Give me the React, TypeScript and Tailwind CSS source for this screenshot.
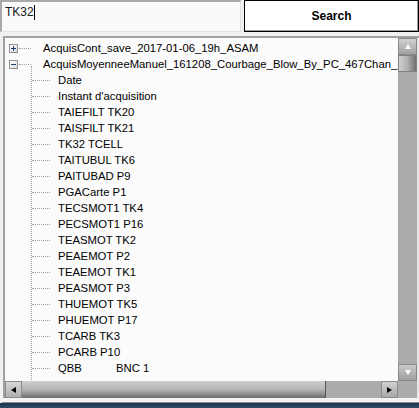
import React from 'react';

const font = { fontFamily: 'Tahoma, "Liberation Sans", Arial, sans-serif' };

const children = [
  'Date',
  "Instant d'acquisition",
  'TAIEFILT TK20',
  'TAISFILT TK21',
  'TK32 TCELL',
  'TAITUBUL TK6',
  'PAITUBAD P9',
  'PGACarte P1',
  'TECSMOT1 TK4',
  'PECSMOT1 P16',
  'TEASMOT TK2',
  'PEAEMOT P2',
  'TEAEMOT TK1',
  'PEASMOT P3',
  'THUEMOT TK5',
  'PHUEMOT P17',
  'TCARB TK3',
  'PCARB P10',
];

function Expander({ open }: { open: boolean }) {
  return (
    <div className="relative w-[9px] h-[9px] border border-[#919191] bg-gradient-to-br from-white to-[#dcdcdc] box-border shrink-0">
      <div className="absolute left-[1px] top-[3px] w-[5px] h-px bg-[#1c3a6e]" />
      {!open && <div className="absolute left-[3px] top-[1px] w-px h-[5px] bg-[#1c3a6e]" />}
    </div>
  );
}

function Arrow({ dir }: { dir: 'up' | 'down' | 'left' | 'right' }) {
  const pts = {
    up: '4,1 7,6 1,6',
    down: '1,1 7,1 4,6',
    left: '6,1 6,7 1,4',
    right: '1,1 1,7 6,4',
  }[dir];
  const fill = dir === 'up' || dir === 'down' ? '#ffffff' : '#000000';
  return (
    <svg width="8" height="8" viewBox="0 0 8 8">
      <polygon points={pts} fill={fill} />
    </svg>
  );
}

export default function App() {
  return (
    <div className="w-[419px] h-[408px] bg-[#f0f0f0] overflow-hidden text-[11.3px] text-[#000]" style={font}>
      <div className="flex h-[33px]">
        <div className="w-[241px] h-[32px] border-t-2 border-l-2 border-[#a9a9a9] border-b border-r border-b-[#e3e3e3] border-r-[#e3e3e3] bg-[#f9f9f9] flex items-start pt-[2px] pl-[3px] box-border">
          <span className="text-[#1a1a1a] leading-[16px] text-[12px]">TK32</span>
          <span className="w-px h-[15px] bg-black mt-[1px]" />
        </div>
        <div className="ml-[3px] w-[175px] h-[32px] border border-black bg-white flex items-center justify-center font-bold text-[12px] box-border shadow-[inset_-1px_-1px_0_#a0a0a0]">
          Search
        </div>
      </div>
      <div className="ml-[3px] mt-[3px] h-[362px] border-t-2 border-l-2 border-[#a0a0a0] bg-[#fbfbfb] flex box-border">
        <div className="flex-1 min-w-0 flex flex-col">
          <div className="flex-1 relative pt-[2px] overflow-hidden">
            <div className="absolute left-[26px] top-[28px] h-[340px] border-l border-dotted border-[#a0a0a0]" />
            <div className="h-[16px] flex items-center pl-[4px] whitespace-nowrap">
              <Expander open={false} />
              <div className="w-[12px] ml-[1px] border-t border-dotted border-[#a0a0a0] shrink-0" />
              <span className="ml-[12px]">AcquisCont_save_2017-01-06_19h_ASAM</span>
            </div>
            <div className="h-[16px] flex items-center pl-[4px] whitespace-nowrap">
              <Expander open={true} />
              <div className="w-[12px] ml-[1px] border-t border-dotted border-[#a0a0a0] shrink-0" />
              <span className="ml-[12px]">AcquisMoyenneeManuel_161208_Courbage_Blow_By_PC_467Chan_1</span>
            </div>
            {children.map((c) => (
              <div key={c} className="h-[16px] flex items-center pl-[27px] whitespace-nowrap">
                <div className="w-[18px] border-t border-dotted border-[#a0a0a0] shrink-0" />
                <span className="ml-[8px]">{c}</span>
              </div>
            ))}
            <div className="h-[16px] flex items-center pl-[27px] whitespace-nowrap">
              <div className="w-[18px] border-t border-dotted border-[#a0a0a0] shrink-0" />
              <span className="ml-[8px] w-[58px]">QBB</span>
              <span>BNC 1</span>
            </div>
          </div>
          <div className="h-[17px] flex bg-[#ababab] shrink-0">
            <div className="w-[17px] h-[17px] flex items-center justify-center bg-gradient-to-b from-[#d8d8d8] to-[#b0b0b0] border border-[#8a8a8a]">
              <Arrow dir="left" />
            </div>
            <div className="w-[304px] h-[17px] bg-gradient-to-b from-[#cfcfcf] via-[#b5b5b5] to-[#6f6f6f] border-r border-[#555]" />
            <div className="flex-1" />
            <div className="w-[17px] h-[17px] flex items-center justify-center bg-gradient-to-b from-[#d0d0d0] to-[#a8a8a8] border border-[#8a8a8a]">
              <Arrow dir="right" />
            </div>
          </div>
        </div>
        <div className="w-[21px] shrink-0 flex flex-col bg-[#ababab] border-r-2 border-[#e8e8e8]">
          <div className="w-[19px] h-[17px] flex items-center justify-center bg-gradient-to-b from-[#d0d0d0] to-[#a0a0a0] border border-[#8a8a8a]">
            <Arrow dir="up" />
          </div>
          <div className="w-[19px] h-[17px] bg-gradient-to-r from-[#d0d0d0] via-[#b0b0b0] to-[#707070] border border-[#808080]" />
          <div className="flex-1" />
          <div className="w-[19px] h-[17px] flex items-center justify-center bg-gradient-to-b from-[#c8c8c8] to-[#a0a0a0] border border-[#8a8a8a]">
            <Arrow dir="down" />
          </div>
          <div className="h-[17px]" />
        </div>
      </div>
      <div className="h-[5px] bg-[#f4f4f4] border-b border-[#8a8a8a] ml-[2px]" />
      <div className="h-[5px] bg-gradient-to-b from-[#1e3550] to-[#2e4a6a]" />
    </div>
  );
}
